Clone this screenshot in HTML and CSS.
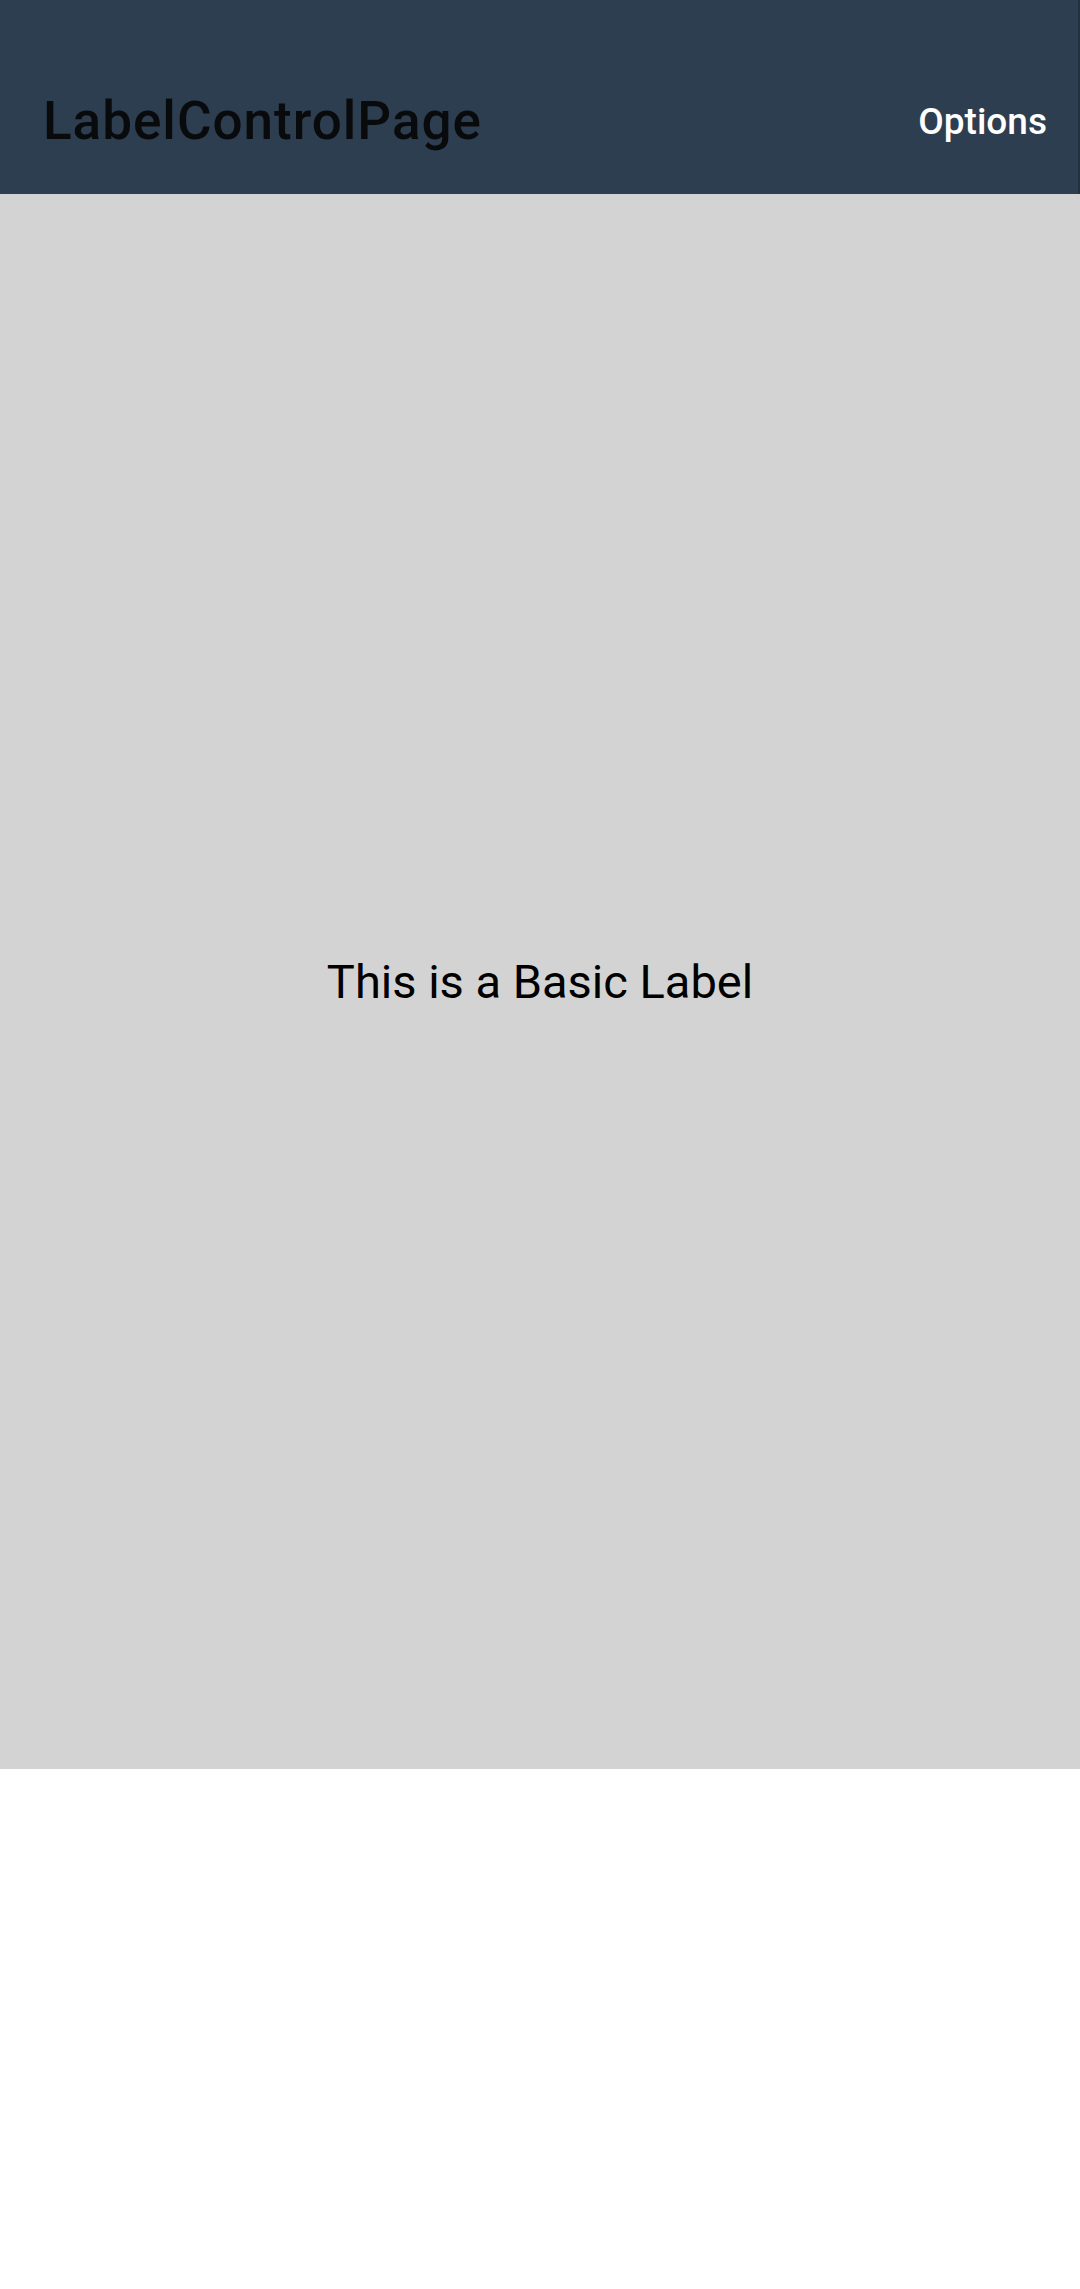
FILE: index.html
```html
<!DOCTYPE html>
<html>
<head>
<meta charset="utf-8">
<link rel="stylesheet" href="styles.css">
</head>
<body>
<header class="appbar">
  <div class="toolbar">
    <h1 class="title">LabelControlPage</h1>
    <span class="action">Options</span>
  </div>
</header>
<main class="content">
  <p class="basic-label">This is a Basic Label</p>
</main>
</body>
</html>
```
FILE: styles.css
```css
html, body {
  margin: 0;
  padding: 0;
  background: #ffffff;
  font-family: Roboto, "Noto Sans", sans-serif;
}
.appbar {
  background: #2d3e50;
  padding-top: 48px;
  border-right: 2px solid #24313f;
}
.toolbar {
  height: 146px;
  display: flex;
  align-items: center;
  justify-content: space-between;
  padding: 0 31px 0 43px;
}
.title {
  margin: 0;
  font-size: 53px;
  font-weight: 500;
  letter-spacing: 1px;
  color: #090a0c;
}
.action {
  font-size: 37px;
  font-weight: 500;
  color: #ffffff;
}
.content {
  height: 1575px;
  background: #d3d3d3;
  display: flex;
  align-items: center;
  justify-content: center;
}
.basic-label {
  margin: 0;
  font-size: 47px;
  color: #000000;
}
```
